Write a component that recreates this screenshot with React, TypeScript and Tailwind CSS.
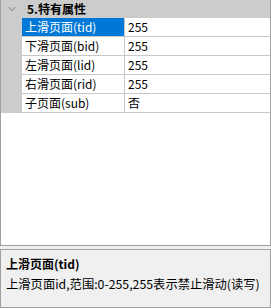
import { ChevronDown } from 'lucide-react';

const rows = [
    { name: '上滑页面(tid)', value: '255' },
    { name: '下滑页面(bid)', value: '255' },
    { name: '左滑页面(lid)', value: '255' },
    { name: '右滑页面(rid)', value: '255' },
    { name: '子页面(sub)', value: '否' },
];

export default function App() {
    const selected = 0;

    return (
        <div
            className="w-[271px] h-[308px] bg-[#f0f0f0] flex flex-col text-[12px] text-black"
            style={{ fontFamily: '"Noto Sans CJK SC", "Liberation Sans", sans-serif' }}
        >
            {/* Property grid */}
            <div className="h-[246px] bg-white border border-t-0 border-[#a0a0a0] flex flex-col">
                {/* Category header */}
                <div className="h-[18px] bg-[#cccccc] flex items-center">
                    <div className="w-[21px] flex justify-center">
                        <ChevronDown className="w-3 h-3 text-[#666]" strokeWidth={1.75} />
                    </div>
                    <span className="pl-[5px] font-bold leading-none">5.特有属性</span>
                </div>

                {rows.map((row, idx) => (
                    <div key={idx} className="h-[19px] flex">
                        <div className="w-[21px] bg-[#cccccc]" />
                        <div
                            className={`w-[103px] flex items-center pl-[3px] border-b border-r border-[#c8c8c8] ${
                                idx === selected ? 'bg-[#0078d7] text-white' : 'bg-white'
                            }`}
                        >
                            {row.name}
                        </div>
                        <div className="flex-1 flex items-center pl-[3px] border-b border-[#c8c8c8]">
                            {row.value}
                        </div>
                    </div>
                ))}
            </div>

            {/* Description */}
            <div className="mt-[3px] flex-1 border border-[#a0a0a0] bg-[#f0f0f0] px-[5px] pt-[5px]">
                <div className="font-bold leading-[18px]">上滑页面(tid)</div>
                <div className="leading-[18px] mt-[2px] whitespace-nowrap text-[12.3px]">
                    上滑页面id,范围:0-255,255表示禁止滑动(读写)
                </div>
            </div>
        </div>
    );
}
